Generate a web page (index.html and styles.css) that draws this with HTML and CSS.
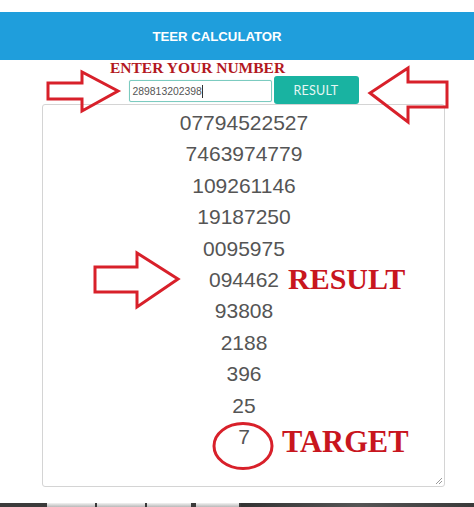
FILE: index.html
```html
<!DOCTYPE html>
<html lang="en">
<head>
<meta charset="utf-8">
<title>Teer Calculator</title>
<link rel="stylesheet" href="styles.css">
</head>
<body>
<div class="page">
  <header class="topbar"><h1 class="title">TEER CALCULATOR</h1></header>
  <main class="calc">
    <div class="form-row">
      <div class="num-input">289813202398<span class="caret"></span></div>
      <button class="result-btn">RESULT</button>
    </div>
    <div class="output">
      <div class="line">07794522527</div>
      <div class="line">7463974779</div>
      <div class="line">109261146</div>
      <div class="line">19187250</div>
      <div class="line">0095975</div>
      <div class="line">094462</div>
      <div class="line">93808</div>
      <div class="line">2188</div>
      <div class="line">396</div>
      <div class="line">25</div>
      <div class="line">7</div>
      <svg class="grip" width="8" height="8" viewBox="0 0 8 8"><path d="M7 1L1 7M7 4L4 7" stroke="#9a9a9a" stroke-width="1"/></svg>
    </div>
  </main>
  <div class="taskbar">
    <span class="tb-dark tb-start"></span>
    <span class="tb-tab"></span>
    <span class="tb-tab"></span>
    <span class="tb-tab"></span>
    <span class="tb-tab"></span>
    <span class="tb-dark tb-rest"></span>
  </div>
  <div class="notes">
    <span class="note note-enter">ENTER YOUR NUMBER</span>
    <span class="note note-result">RESULT</span>
    <span class="note note-target">TARGET</span>
    <svg class="note-shapes" width="474" height="507" viewBox="0 0 474 507">
      <polygon points="48,83 82,83 82,72 118,91 82,111 82,99 48,99" fill="none" stroke="#d8202a" stroke-width="3" stroke-linejoin="miter"/>
      <polygon points="447,82 408,82 408,68 370,93 408,122 408,107 447,107" fill="none" stroke="#d8202a" stroke-width="3" stroke-linejoin="miter"/>
      <polygon points="95,267 137,267 137,253 178,279 137,307 137,292 95,292" fill="none" stroke="#d8202a" stroke-width="3" stroke-linejoin="miter"/>
      <ellipse cx="243" cy="446" rx="29" ry="22.5" fill="none" stroke="#d8202a" stroke-width="3"/>
    </svg>
  </div>
</div>
</body>
</html>
```
FILE: styles.css
```css
* { box-sizing: border-box; }
html, body { margin: 0; padding: 0; background: #fff; }
body { font-family: "Liberation Sans", Arial, sans-serif; width: 474px; height: 507px; overflow: hidden; }

.page { position: relative; width: 474px; height: 507px; padding-top: 12px; }

.topbar {
  height: 48px;
  background: #1f9edc;
  display: flex;
  align-items: center;
  justify-content: center;
  padding-right: 40px;
}
.title {
  margin: 0;
  color: #fff;
  font-size: 13.2px;
  font-weight: bold;
}

.calc { padding: 16px 0 0 42px; }

.form-row {
  width: 403px;
  height: 28px;
  display: flex;
  justify-content: center;
  align-items: center;
  gap: 2px;
}
.num-input {
  width: 143px;
  height: 22px;
  margin-top: 2px;
  border: 1px solid #7ccbc0;
  border-radius: 2px;
  box-shadow: 0 0 1px #a8ddd5;
  font-size: 10.4px;
  color: #555;
  padding: 0 3px;
  display: flex;
  align-items: center;
  background: #fff;
}
.caret { display: inline-block; width: 1px; height: 13px; background: #333; }
.result-btn {
  width: 85px;
  height: 28px;
  border: none;
  border-radius: 3px;
  background: #19b3a1;
  color: #e6f7f4;
  font-family: Lato, "Liberation Sans", sans-serif;
  font-size: 12.5px;
  letter-spacing: 0.2px;
  padding: 0;
}

.output {
  position: relative;
  width: 403px;
  height: 383px;
  border: 1px solid #d4d4d4;
  border-radius: 3px;
  padding-top: 2px;
  text-align: center;
  color: #555;
  font-size: 21px;
  line-height: 31.4px;
}
.line { padding-left: 1px; }
.grip { position: absolute; right: 1px; bottom: 1px; }

.taskbar {
  position: absolute;
  left: 0;
  right: 0;
  bottom: 0;
  height: 4px;
  display: flex;
  gap: 2px;
  background: #3b3b3b;
}
.tb-dark { background: #3b3b3b; }
.tb-start { width: 45px; }
.tb-tab { width: 48px; background: linear-gradient(#f2f2f2, #b8b8b8); }
.tb-tab:nth-child(4) { width: 44px; }
.tb-tab:nth-child(5) { width: 43px; margin-left: 3px; }
.tb-rest { flex: 1; background: linear-gradient(90deg, #333, #555 50%, #3a3a3a); }

.notes { position: absolute; inset: 0; pointer-events: none; }
.note-shapes { position: absolute; left: 0; top: 0; }
.note {
  position: absolute;
  font-family: "Liberation Serif", "Times New Roman", serif;
  font-weight: bold;
  color: #c8161e;
  white-space: nowrap;
  line-height: 1;
}
.note-enter { left: 110px; top: 60px; font-size: 15.5px; color: #b3191f; }
.note-result { left: 288px; top: 264px; font-size: 30px; }
.note-target { left: 282px; top: 427px; font-size: 30.5px; }
```
